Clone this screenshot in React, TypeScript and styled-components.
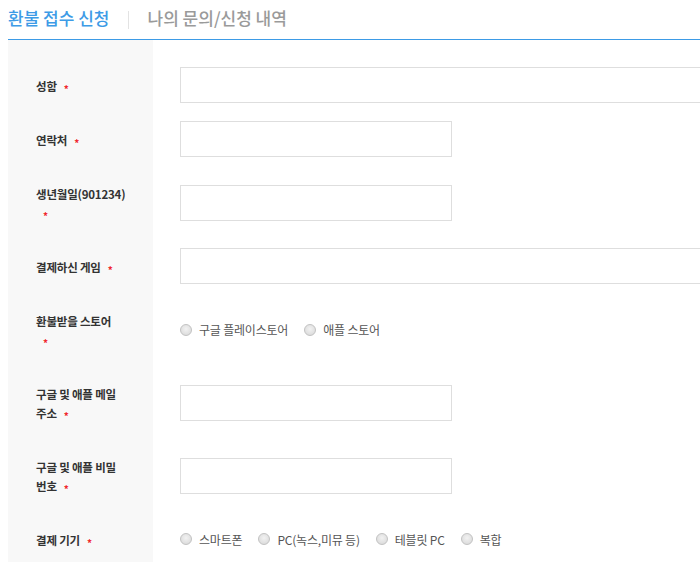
import styled, { createGlobalStyle } from 'styled-components';

const GlobalStyle = createGlobalStyle`
  html, body {
    margin: 0;
    padding: 0;
    background: #fff;
  }
  body {
    font-family: "Noto Sans CJK KR", "Noto Sans", sans-serif;
  }
`;

const Page = styled.div`
  padding-left: 8px;
  overflow: hidden;
`;

const Tabs = styled.div`
  display: flex;
  align-items: center;
  height: 39px;
  border-bottom: 1px solid #3d9be6;
`;

const Tab = styled.span<{ $active?: boolean }>`
  font-size: 17px;
  font-weight: 500;
  line-height: 20px;
  margin-top: -3px;
  white-space: nowrap;
  color: ${({ $active }) => ($active ? '#3d9be6' : '#9a9a9a')};
`;

const Divider = styled.span`
  width: 1px;
  height: 18px;
  margin: 0 19px 0 18px;
  background: #e3e3e3;
`;

const Form = styled.div`
  padding-top: 18px;
  background: linear-gradient(90deg, #f8f8f8 0 145px, #fff 145px);
`;

const Row = styled.div`
  display: grid;
  grid-template-columns: 145px 1fr;
  align-items: center;
`;

const Label = styled.div`
  padding: 19px 0 16px 28px;
  font-size: 11.5px;
  line-height: 19px;
  font-weight: 700;
  letter-spacing: -0.2px;
  color: #333;
  white-space: nowrap;
`;

const Required = styled.span`
  display: inline-block;
  margin-left: 7px;
  font-size: 10px;
  line-height: 10px;
  color: #f0262e;
  vertical-align: -2px;
`;

const Field = styled.div`
  display: flex;
  align-items: center;
  padding: 9px 0 9px 27px;
`;

const TextInput = styled.input<{ $short?: boolean }>`
  box-sizing: border-box;
  flex: none;
  width: ${({ $short }) => ($short ? '272px' : '560px')};
  height: 36px;
  border: 1px solid #dedede;
  background: #fff;
  outline: none;
`;

const Option = styled.label`
  display: flex;
  align-items: center;
  margin-right: 16px;
  font-size: 12px;
  line-height: 19px;
  letter-spacing: -0.2px;
  white-space: nowrap;
  color: #555;
`;

const Radio = styled.input`
  appearance: none;
  box-sizing: border-box;
  width: 12px;
  height: 12px;
  margin: 0 7px 0 0;
  border: 1px solid #c2c2c2;
  border-radius: 50%;
  background: radial-gradient(circle at 50% 40%, #f2f2f2 0%, #d6d6d6 100%);
`;

type FieldDef = {
  lines: string[];
  input?: 'long' | 'short';
  options?: string[];
  name: string;
};

const fields: FieldDef[] = [
  { name: 'name', lines: ['성함'], input: 'long' },
  { name: 'phone', lines: ['연락처'], input: 'short' },
  { name: 'birth', lines: ['생년월일(901234)', ''], input: 'short' },
  { name: 'game', lines: ['결제하신 게임'], input: 'long' },
  { name: 'store', lines: ['환불받을 스토어', ''], options: ['구글 플레이스토어', '애플 스토어'] },
  { name: 'mail', lines: ['구글 및 애플 메일', '주소'], input: 'short' },
  { name: 'pw', lines: ['구글 및 애플 비밀', '번호'], input: 'short' },
  { name: 'device', lines: ['결제 기기'], options: ['스마트폰', 'PC(녹스,미뮤 등)', '테블릿 PC', '복합'] },
];

const App = () => {
  return (
    <>
      <GlobalStyle />
      <Page>
        <Tabs>
          <Tab $active>환불 접수 신청</Tab>
          <Divider />
          <Tab>나의 문의/신청 내역</Tab>
        </Tabs>
        <Form>
          {fields.map((f) => (
            <Row key={f.name}>
              <Label>
                {f.lines.map((line, i) => (
                  <div key={i}>
                    {line}
                    {i === f.lines.length - 1 && <Required>*</Required>}
                  </div>
                ))}
              </Label>
              <Field>
                {f.input && <TextInput type="text" $short={f.input === 'short'} />}
                {f.options &&
                  f.options.map((opt) => (
                    <Option key={opt}>
                      <Radio type="radio" name={f.name} />
                      {opt}
                    </Option>
                  ))}
              </Field>
            </Row>
          ))}
        </Form>
      </Page>
    </>
  );
};

export default App;
